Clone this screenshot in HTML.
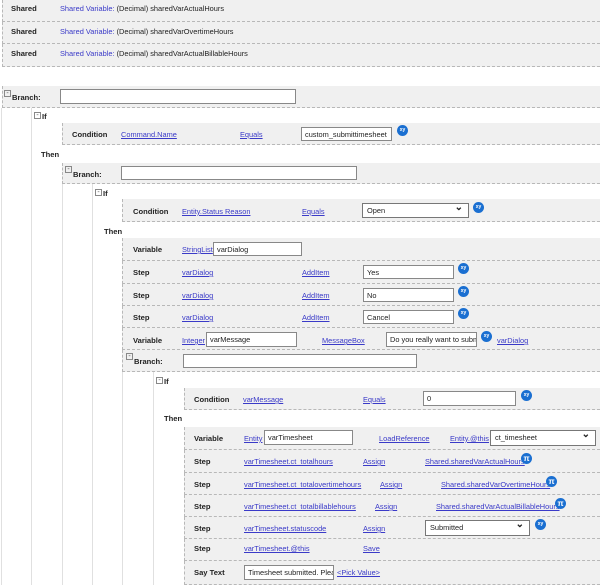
<!DOCTYPE html>
<html><head><style>
body{margin:0;width:600px;height:585px;background:#fff;font-family:"Liberation Sans",sans-serif;font-size:7.4px;color:#222;position:relative;overflow:hidden}
div,span{position:absolute;box-sizing:border-box;white-space:nowrap}
.r{background:#f0f0f0;border-bottom:1px dashed #b8b8b8;border-left:1px dashed #b8b8b8;right:0}
.b{font-weight:bold;color:#222;font-size:7.6px}
.l{color:#3a3ac8;text-decoration:underline}
.i{background:#fff;border:1px solid #888;padding-left:3px;line-height:13px;overflow:hidden}
.s{background:#fff;border:1px solid #777;padding-left:4px;line-height:13px}
.s:after{content:"⌄";position:absolute;right:5px;top:-3px;font-size:10px;font-weight:bold}
.c{width:11px;height:11px;border-radius:50%;background:#1a6fd1;color:#fff;font-size:5px;text-align:center;line-height:11px;font-weight:bold}
.t{width:7px;height:7px;border:1px solid #888;font-size:7px;line-height:5px;text-align:center;color:#555}
.v{width:1px;background:#e0e0e0}
</style></head><body>
<div class="r" style="left:2px;top:0;height:22px"></div>
<div class="r" style="left:2px;top:22px;height:22px"></div>
<div class="r" style="left:2px;top:44px;height:23px"></div>
<span class="b" style="left:11px;top:4px">Shared</span><span style="left:60px;top:4px"><font color="#3a3ac8">Shared Variable:</font> (Decimal) sharedVarActualHours</span>
<span class="b" style="left:11px;top:27px">Shared</span><span style="left:60px;top:27px"><font color="#3a3ac8">Shared Variable:</font> (Decimal) sharedVarOvertimeHours</span>
<span class="b" style="left:11px;top:49px">Shared</span><span style="left:60px;top:49px"><font color="#3a3ac8">Shared Variable:</font> (Decimal) sharedVarActualBillableHours</span>

<div class="v" style="left:1px;top:108px;height:477px"></div>
<div class="v" style="left:31px;top:108px;height:477px"></div>
<div class="v" style="left:62px;top:184px;height:401px"></div>
<div class="v" style="left:92px;top:184px;height:401px"></div>
<div class="v" style="left:122px;top:372px;height:213px"></div>
<div class="v" style="left:153px;top:372px;height:213px"></div>

<div class="r" style="left:2px;top:86px;height:22px"></div>
<span class="t" style="left:4px;top:90px">-</span><span class="b" style="left:12px;top:93px">Branch:</span>
<div class="i" style="left:60px;top:89px;width:236px;height:15px"></div>
<span class="t" style="left:34px;top:112px">-</span><span class="b" style="left:42px;top:112px">If</span>
<div class="r" style="left:62px;top:123px;height:22px"></div>
<span class="b" style="left:72px;top:130px">Condition</span><span class="l" style="left:121px;top:130px">Command.Name</span><span class="l" style="left:240px;top:130px">Equals</span>
<div class="i" style="left:301px;top:127px;width:91px;height:14px">custom_submittimesheet</div><div class="c" style="left:397px;top:125px">xy</div>
<span class="b" style="left:41px;top:150px">Then</span>

<div class="r" style="left:62px;top:163px;height:21px"></div>
<span class="t" style="left:65px;top:166px">-</span><span class="b" style="left:73px;top:170px">Branch:</span>
<div class="i" style="left:121px;top:166px;width:236px;height:14px"></div>
<span class="t" style="left:95px;top:189px">-</span><span class="b" style="left:103px;top:189px">If</span>
<div class="r" style="left:122px;top:199px;height:23px"></div>
<span class="b" style="left:133px;top:207px">Condition</span><span class="l" style="left:182px;top:207px">Entity.Status Reason</span><span class="l" style="left:302px;top:207px">Equals</span>
<div class="s" style="left:362px;top:203px;width:107px;height:15px">Open</div><div class="c" style="left:473px;top:202px">xy</div>
<span class="b" style="left:104px;top:227px">Then</span>

<div class="r" style="left:122px;top:238px;height:23px"></div>
<div class="r" style="left:122px;top:261px;height:23px"></div>
<div class="r" style="left:122px;top:284px;height:22px"></div>
<div class="r" style="left:122px;top:306px;height:22px"></div>
<div class="r" style="left:122px;top:328px;height:22px"></div>
<div class="r" style="left:122px;top:350px;height:22px"></div>
<span class="b" style="left:133px;top:245px">Variable</span><span class="l" style="left:182px;top:245px">StringList</span><div class="i" style="left:213px;top:242px;width:89px;height:14px">varDialog</div>
<span class="b" style="left:133px;top:268px">Step</span><span class="l" style="left:182px;top:268px">varDialog</span><span class="l" style="left:302px;top:268px">AddItem</span><div class="i" style="left:363px;top:265px;width:91px;height:14px">Yes</div><div class="c" style="left:458px;top:263px">xy</div>
<span class="b" style="left:133px;top:291px">Step</span><span class="l" style="left:182px;top:291px">varDialog</span><span class="l" style="left:302px;top:291px">AddItem</span><div class="i" style="left:363px;top:288px;width:91px;height:14px">No</div><div class="c" style="left:458px;top:286px">xy</div>
<span class="b" style="left:133px;top:313px">Step</span><span class="l" style="left:182px;top:313px">varDialog</span><span class="l" style="left:302px;top:313px">AddItem</span><div class="i" style="left:363px;top:310px;width:91px;height:14px">Cancel</div><div class="c" style="left:458px;top:308px">xy</div>
<span class="b" style="left:133px;top:336px">Variable</span><span class="l" style="left:182px;top:336px">Integer</span><div class="i" style="left:206px;top:332px;width:91px;height:15px">varMessage</div>
<span class="l" style="left:322px;top:336px">MessageBox</span><div class="i" style="left:386px;top:332px;width:91px;height:15px">Do you really want to submit</div><div class="c" style="left:481px;top:331px">xy</div><span class="l" style="left:497px;top:336px">varDialog</span>
<span class="t" style="left:126px;top:353px">-</span><span class="b" style="left:134px;top:357px">Branch:</span>
<div class="i" style="left:183px;top:354px;width:234px;height:14px"></div>

<span class="t" style="left:156px;top:377px">-</span><span class="b" style="left:164px;top:377px">If</span>
<div class="r" style="left:184px;top:388px;height:22px"></div>
<span class="b" style="left:194px;top:395px">Condition</span><span class="l" style="left:243px;top:395px">varMessage</span><span class="l" style="left:363px;top:395px">Equals</span>
<div class="i" style="left:423px;top:391px;width:93px;height:15px">0</div><div class="c" style="left:521px;top:390px">xy</div>
<span class="b" style="left:164px;top:414px">Then</span>

<div class="r" style="left:184px;top:427px;height:23px"></div>
<div class="r" style="left:184px;top:450px;height:23px"></div>
<div class="r" style="left:184px;top:473px;height:22px"></div>
<div class="r" style="left:184px;top:495px;height:22px"></div>
<div class="r" style="left:184px;top:517px;height:22px"></div>
<div class="r" style="left:184px;top:539px;height:22px"></div>
<div class="r" style="left:184px;top:561px;height:24px"></div>
<span class="b" style="left:194px;top:434px">Variable</span><span class="l" style="left:244px;top:434px">Entity</span><div class="i" style="left:264px;top:430px;width:89px;height:15px">varTimesheet</div>
<span class="l" style="left:379px;top:434px">LoadReference</span><span class="l" style="left:450px;top:434px">Entity.@this</span><div class="s" style="left:490px;top:430px;width:106px;height:16px">ct_timesheet</div>
<span class="b" style="left:194px;top:457px">Step</span><span class="l" style="left:244px;top:457px">varTimesheet.ct_totalhours</span><span class="l" style="left:363px;top:457px">Assign</span><span class="l" style="left:425px;top:457px">Shared.sharedVarActualHours</span><div class="c" style="left:521px;top:453px;font-size:8px">π</div>
<span class="b" style="left:194px;top:480px">Step</span><span class="l" style="left:244px;top:480px">varTimesheet.ct_totalovertimehours</span><span class="l" style="left:380px;top:480px">Assign</span><span class="l" style="left:441px;top:480px">Shared.sharedVarOvertimeHours</span><div class="c" style="left:546px;top:476px;font-size:8px">π</div>
<span class="b" style="left:194px;top:502px">Step</span><span class="l" style="left:244px;top:502px">varTimesheet.ct_totalbillablehours</span><span class="l" style="left:375px;top:502px">Assign</span><span class="l" style="left:436px;top:502px">Shared.sharedVarActualBillableHours</span><div class="c" style="left:555px;top:498px;font-size:8px">π</div>
<span class="b" style="left:194px;top:524px">Step</span><span class="l" style="left:244px;top:524px">varTimesheet.statuscode</span><span class="l" style="left:363px;top:524px">Assign</span><div class="s" style="left:425px;top:520px;width:105px;height:16px">Submitted</div><div class="c" style="left:535px;top:519px">xy</div>
<span class="b" style="left:194px;top:544px">Step</span><span class="l" style="left:244px;top:544px">varTimesheet.@this</span><span class="l" style="left:363px;top:544px">Save</span>
<span class="b" style="left:194px;top:568px">Say Text</span><div class="i" style="left:244px;top:565px;width:90px;height:15px">Timesheet submitted. Please</div><span class="l" style="left:337px;top:568px">&lt;Pick Value&gt;</span>
</body></html>
